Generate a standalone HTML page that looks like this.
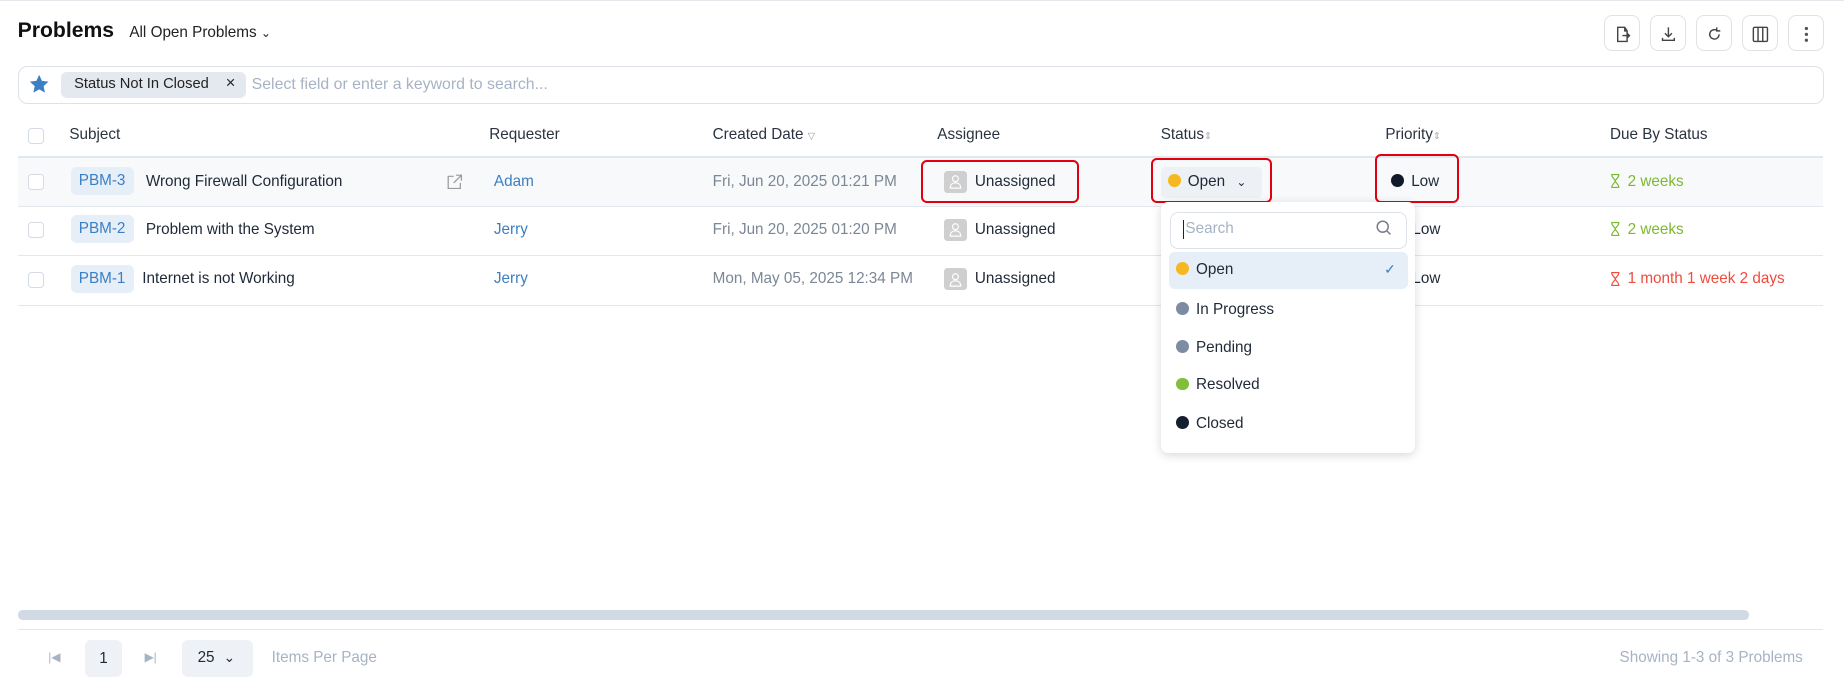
<!DOCTYPE html>
<html><head><meta charset="utf-8"><style>
html,body{margin:0;padding:0;background:#fff;width:1844px;height:682px;overflow:hidden}
#w{position:absolute;left:0;top:0;width:1568px;height:580px;zoom:1.17602;font-family:"Liberation Sans",sans-serif;color:#1f2937;font-size:13px}
.a{position:absolute;white-space:nowrap}
.btn{position:absolute;top:13px;width:29px;height:29px;border:1px solid #dfe3e8;border-radius:7px;background:#fff}
.btn svg{position:absolute;left:7px;top:7px}
.cb{position:absolute;left:24px;width:12px;height:12px;border:1px solid #d5dbe3;border-radius:3px;background:#fff}
.hd{position:absolute;top:107px;font-size:13px;color:#2b3340}
.line{position:absolute;left:15px;width:1535px;height:1px;background:#e2e7ee}
.badge{position:absolute;left:60px;height:24px;line-height:24px;padding:0 7px;background:#e6eef8;color:#3b7fc4;border-radius:5px;font-size:13px}
.blue{color:#3b7fc4}
.gray{color:#7b8794}
.un{position:absolute;left:803px}
.un i{position:absolute;left:0;top:-2px;width:19px;height:19px;background:#cfcfcf;border-radius:3px}
.un i svg{position:absolute;left:4px;top:3px}
.un span{position:absolute;left:26px;top:0}
.red{position:absolute;border:2px solid #e0000f;border-radius:5px}
.dot{display:inline-block;width:11px;height:11px;border-radius:50%;vertical-align:-1px;margin-right:6px}
.it{position:absolute;left:1000px;font-size:13px}
.hg{position:absolute;left:1369px;font-size:13px}
.hg svg{vertical-align:-2px;margin-right:6px}
</style></head><body><div id="w">
<div class="a" style="left:0;top:0;width:1568px;height:1px;background:#e5e8ec"></div>
<div class="a" style="left:15px;top:16px;font-size:18px;font-weight:600;color:#111">Problems</div>
<div class="a" style="left:110px;top:20px;font-size:13px;color:#222">All Open Problems <span style="font-size:10px">&#8964;</span></div>
<div class="btn" style="left:1364px"><svg width="16" height="16" viewBox="0 0 16 16" fill="none" stroke="#444" stroke-width="1.2"><path d="M10 2H4v12h8V5z M10 2v3h2 M8 9h6 M12 7l2 2-2 2"/></svg></div>
<div class="btn" style="left:1403px"><svg width="16" height="16" viewBox="0 0 16 16" fill="none" stroke="#444" stroke-width="1.2"><path d="M8 2v8 M5 7l3 3 3-3 M3 11v2h10v-2"/></svg></div>
<div class="btn" style="left:1442px"><svg width="16" height="16" viewBox="0 0 16 16" fill="none" stroke="#444" stroke-width="1.2"><path d="M12 8a4 4 0 1 1-2-3.5 M10 2v3h3"/></svg></div>
<div class="btn" style="left:1481px"><svg width="16" height="16" viewBox="0 0 16 16" fill="none" stroke="#444" stroke-width="1.2"><rect x="2" y="2" width="12" height="12" rx="1"/><path d="M6 2v12 M10 2v12"/></svg></div>
<div class="btn" style="left:1520px"><svg width="16" height="16" viewBox="0 0 16 16" fill="#555"><circle cx="8" cy="3" r="1.4"/><circle cx="8" cy="8" r="1.4"/><circle cx="8" cy="13" r="1.4"/></svg></div>
<div class="a" style="left:15px;top:56px;width:1534px;height:31px;border:1px solid #dde2e8;border-radius:8px"></div>
<svg class="a" style="left:24px;top:62px" width="19" height="19" viewBox="0 0 24 24"><path fill="#3b7fc4" d="M12 2l3 6.5 7 .8-5.2 4.8 1.4 7L12 17.6 5.8 21.1l1.4-7L2 9.3l7-.8z"/></svg>
<div class="a" style="left:52px;top:61px;width:157px;height:22px;background:#e4e9f0;border-radius:5px"></div>
<div class="a" style="left:63px;top:65px;font-size:12.5px;color:#222">Status Not In Closed</div>
<div class="a" style="left:192px;top:63px;font-size:14px;color:#222">×</div>
<div class="a" style="left:214px;top:65px;font-size:13.5px;color:#a6b3c4">Select field or enter a keyword to search...</div>
<div class="cb" style="top:109px"></div>
<div class="hd" style="left:59px">Subject</div>
<div class="hd" style="left:416px">Requester</div>
<div class="hd" style="left:606px">Created Date <span style="font-size:8px;color:#999">▽</span></div>
<div class="hd" style="left:797px">Assignee</div>
<div class="hd" style="left:987px">Status<span style="font-size:8px;color:#aaa">⇕</span></div>
<div class="hd" style="left:1178px">Priority<span style="font-size:8px;color:#aaa">⇕</span></div>
<div class="hd" style="left:1369px">Due By Status</div>
<div class="line" style="top:133px"></div>
<div class="a" style="left:15px;top:134px;width:1535px;height:41px;background:#f7f9fb"></div>
<div class="line" style="top:175px"></div>
<div class="line" style="top:217px"></div>
<div class="line" style="top:259px"></div>
<div class="cb" style="top:148px"></div><div class="cb" style="top:189px"></div><div class="cb" style="top:231px"></div>
<div class="badge" style="top:142px">PBM-3</div>
<div class="badge" style="top:183px">PBM-2</div>
<div class="badge" style="top:225px">PBM-1</div>
<div class="a" style="left:124px;top:147px">Wrong Firewall Configuration</div>
<svg class="a" style="left:379px;top:147px" width="15" height="15" viewBox="0 0 16 16" fill="none" stroke="#999" stroke-width="1.1"><path d="M7 3H2v11h11V9 M9 2h5v5 M14 2L7 9"/></svg>
<div class="a" style="left:124px;top:188px">Problem with the System</div>
<div class="a" style="left:121px;top:230px">Internet is not Working</div>
<div class="a blue" style="left:420px;top:147px">Adam</div>
<div class="a blue" style="left:420px;top:188px">Jerry</div>
<div class="a blue" style="left:420px;top:230px">Jerry</div>
<div class="a gray" style="left:606px;top:147px">Fri, Jun 20, 2025 01:21 PM</div>
<div class="a gray" style="left:606px;top:188px">Fri, Jun 20, 2025 01:20 PM</div>
<div class="a gray" style="left:606px;top:230px">Mon, May 05, 2025 12:34 PM</div>
<div class="un" style="top:147px"><i><svg width="11" height="13" viewBox="0 0 11 13" fill="none" stroke="#fff" stroke-width="1"><circle cx="5.5" cy="4" r="2.5"/><path d="M1 12c0-3 2-4.5 4.5-4.5S10 9 10 12z"/></svg></i><span>Unassigned</span></div>
<div class="un" style="top:188px"><i><svg width="11" height="13" viewBox="0 0 11 13" fill="none" stroke="#fff" stroke-width="1"><circle cx="5.5" cy="4" r="2.5"/><path d="M1 12c0-3 2-4.5 4.5-4.5S10 9 10 12z"/></svg></i><span>Unassigned</span></div>
<div class="un" style="top:230px"><i><svg width="11" height="13" viewBox="0 0 11 13" fill="none" stroke="#fff" stroke-width="1"><circle cx="5.5" cy="4" r="2.5"/><path d="M1 12c0-3 2-4.5 4.5-4.5S10 9 10 12z"/></svg></i><span>Unassigned</span></div>
<div class="a" style="left:987px;top:142px;width:86px;height:26px;background:#edf0f4;border-radius:4px"></div>
<div class="a" style="left:993px;top:147px"><span class="dot" style="background:#f5b820"></span>Open <span style="font-size:10px;margin-left:6px">&#8964;</span></div>
<div class="a" style="left:1183px;top:147px"><span class="dot" style="background:#101a2a"></span>Low</div>
<div class="a" style="left:1201px;top:188px">Low</div>
<div class="a" style="left:1201px;top:230px">Low</div>
<div class="hg" style="top:147px;color:#7cb82f"><svg width="9" height="12" viewBox="0 0 9 12" fill="none" stroke="#7cb82f" stroke-width="1"><path d="M1 .5h7M1 11.5h7M1.5 .5c0 3 3 4 3 5.5S1.5 8.5 1.5 11.5M7.5 .5c0 3-3 4-3 5.5s3 2.5 3 5.5"/></svg>2 weeks</div>
<div class="hg" style="top:188px;color:#7cb82f"><svg width="9" height="12" viewBox="0 0 9 12" fill="none" stroke="#7cb82f" stroke-width="1"><path d="M1 .5h7M1 11.5h7M1.5 .5c0 3 3 4 3 5.5S1.5 8.5 1.5 11.5M7.5 .5c0 3-3 4-3 5.5s3 2.5 3 5.5"/></svg>2 weeks</div>
<div class="hg" style="top:230px;color:#ef4b3d"><svg width="9" height="12" viewBox="0 0 9 12" fill="none" stroke="#ef4b3d" stroke-width="1"><path d="M1 .5h7M1 11.5h7M1.5 .5c0 3 3 4 3 5.5S1.5 8.5 1.5 11.5M7.5 .5c0 3-3 4-3 5.5s3 2.5 3 5.5"/></svg>1 month 1 week 2 days</div>
<div class="red" style="left:783px;top:136px;width:131px;height:33px"></div>
<div class="red" style="left:979px;top:134px;width:99px;height:35px"></div>
<div class="red" style="left:1169px;top:131px;width:68px;height:38px"></div>
<div class="a" style="left:987px;top:172px;width:216px;height:213px;background:#fff;border-radius:6px;box-shadow:0 2px 8px rgba(0,0,0,.15)"></div>
<div class="a" style="left:995px;top:180px;width:200px;height:30px;border:1px solid #dde2e8;border-radius:7px"></div>
<div class="a" style="left:1006px;top:187px;width:1px;height:16px;background:#222"></div>
<div class="a" style="left:1008px;top:187px;font-size:13px;color:#a6b3c4">Search</div>
<svg class="a" style="left:1169px;top:186px" width="15" height="15" viewBox="0 0 16 16" fill="none" stroke="#778" stroke-width="1.3"><circle cx="7" cy="7" r="5"/><path d="M11 11l3 3"/></svg>
<div class="a" style="left:994px;top:214px;width:203px;height:32px;background:#e6eef8;border-radius:5px"></div>
<div class="it" style="top:222px"><span class="dot" style="background:#f5b820"></span>Open</div>
<div class="a" style="left:1177px;top:222px;color:#3b7fc4;font-size:12px">✓</div>
<div class="it" style="top:256px"><span class="dot" style="background:#7d8ca3"></span>In Progress</div>
<div class="it" style="top:288px"><span class="dot" style="background:#7d8ca3"></span>Pending</div>
<div class="it" style="top:320px"><span class="dot" style="background:#7fbf3a"></span>Resolved</div>
<div class="it" style="top:353px"><span class="dot" style="background:#15202e"></span>Closed</div>
<div class="a" style="left:15px;top:519px;width:1472px;height:8px;background:#d1dae4;border-radius:4px"></div>
<div class="a" style="left:15px;top:535px;width:1535px;height:1px;background:#e2e7ee"></div>
<div class="a" style="left:41px;top:553px;font-size:10px;color:#a6b3c4">|◀</div>
<div class="a" style="left:72px;top:544px;width:32px;height:32px;background:#eef1f5;border-radius:5px;text-align:center;line-height:32px">1</div>
<div class="a" style="left:123px;top:553px;font-size:10px;color:#a6b3c4">▶|</div>
<div class="a" style="left:155px;top:544px;width:60px;height:32px;background:#eef1f5;border-radius:5px"></div>
<div class="a" style="left:168px;top:552px;font-size:13px">25 <span style="font-size:12px;margin-left:4px">&#8964;</span></div>
<div class="a" style="left:231px;top:552px;color:#a6b3c4">Items Per Page</div>
<div class="a" style="right:35px;top:552px;color:#a6b3c4">Showing 1-3 of 3 Problems</div>
</div></body></html>
